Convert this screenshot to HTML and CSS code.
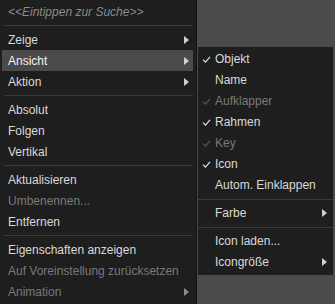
FILE: index.html
```html
<!DOCTYPE html>
<html lang="de">
<head>
  <meta charset="UTF-8">
  <title>Kontextmenü</title>
  <link rel="stylesheet" href="styles.css">
</head>
<body>

<div class="menu main-menu">
  <div class="item search">&lt;&lt;Eintippen zur Suche&gt;&gt;</div>
  <div class="sep"></div>
  <div class="item has-sub">Zeige<span class="arrow"></span></div>
  <div class="item has-sub active">Ansicht<span class="arrow"></span></div>
  <div class="item has-sub">Aktion<span class="arrow"></span></div>
  <div class="sep"></div>
  <div class="item">Absolut</div>
  <div class="item">Folgen</div>
  <div class="item">Vertikal</div>
  <div class="sep"></div>
  <div class="item">Aktualisieren</div>
  <div class="item disabled">Umbenennen...</div>
  <div class="item">Entfernen</div>
  <div class="sep"></div>
  <div class="item">Eigenschaften anzeigen</div>
  <div class="item disabled">Auf Voreinstellung zurücksetzen</div>
  <div class="item has-sub disabled">Animation<span class="arrow"></span></div>
</div>

<div class="menu sub-menu">
  <div class="item checked"><svg class="check" viewBox="0 0 10 8"><path d="M1 4.2 L3.8 7 L9 1"/></svg>Objekt</div>
  <div class="item">Name</div>
  <div class="item checked disabled"><svg class="check" viewBox="0 0 10 8"><path d="M1 4.2 L3.8 7 L9 1"/></svg>Aufklapper</div>
  <div class="item checked"><svg class="check" viewBox="0 0 10 8"><path d="M1 4.2 L3.8 7 L9 1"/></svg>Rahmen</div>
  <div class="item checked disabled"><svg class="check" viewBox="0 0 10 8"><path d="M1 4.2 L3.8 7 L9 1"/></svg>Key</div>
  <div class="item checked"><svg class="check" viewBox="0 0 10 8"><path d="M1 4.2 L3.8 7 L9 1"/></svg>Icon</div>
  <div class="item">Autom. Einklappen</div>
  <div class="sep"></div>
  <div class="item has-sub">Farbe<span class="arrow"></span></div>
  <div class="sep"></div>
  <div class="item">Icon laden...</div>
  <div class="item has-sub">Icongröße<span class="arrow"></span></div>
</div>

</body>
</html>
```

FILE: styles.css
```css
body {
  margin: 0;
  width: 335px;
  height: 304px;
  overflow: hidden;
  background: #4b4b4b;
  font-family: "Liberation Sans", Arial, sans-serif;
  font-size: 12px;
  color: #dadada;
  position: relative;
}

.menu {
  background-color: #1e1e1e;
  display: flex;
  flex-direction: column;
  box-sizing: border-box;
}

.main-menu {
  width: 197px;
  height: 304px;
  padding: 1px 3px 0 2px;
  border-right: 1px solid #141414;
}

.sub-menu {
  position: absolute;
  left: 198px;
  top: 47px;
  width: 135px;
  height: 228px;
  padding: 1.5px 0 0 0;
}

.item {
  height: 21px;
  display: flex;
  align-items: center;
  padding-left: 6px;
  padding-right: 4px;
  position: relative;
  white-space: nowrap;
}

.sub-menu .item {
  padding-left: 17px;
}

.item.active {
  background-color: #4a4a4a;
  color: #f2f2f2;
}

.item.disabled {
  color: #7a7a7a;
}

.item.search {
  font-style: italic;
  color: #8a8a8a;
}

.sep {
  height: 1px;
  margin: 3px 0 3px 2px;
  background-color: #3a3a3a;
}

.sub-menu .sep {
  margin-left: 0;
}

.arrow {
  margin-left: auto;
  width: 0;
  height: 0;
  border-top: 4px solid transparent;
  border-bottom: 4px solid transparent;
  border-left: 5px solid #d0d0d0;
}

.item.disabled .arrow {
  border-left-color: #8a8a8a;
}

.sub-menu .arrow {
  margin-right: 2px;
}

.check {
  position: absolute;
  left: 4px;
  top: 7px;
  width: 9px;
  height: 7px;
  fill: none;
  stroke: #e0e0e0;
  stroke-width: 1.4;
}

.item.disabled .check {
  stroke: #555555;
}
```
